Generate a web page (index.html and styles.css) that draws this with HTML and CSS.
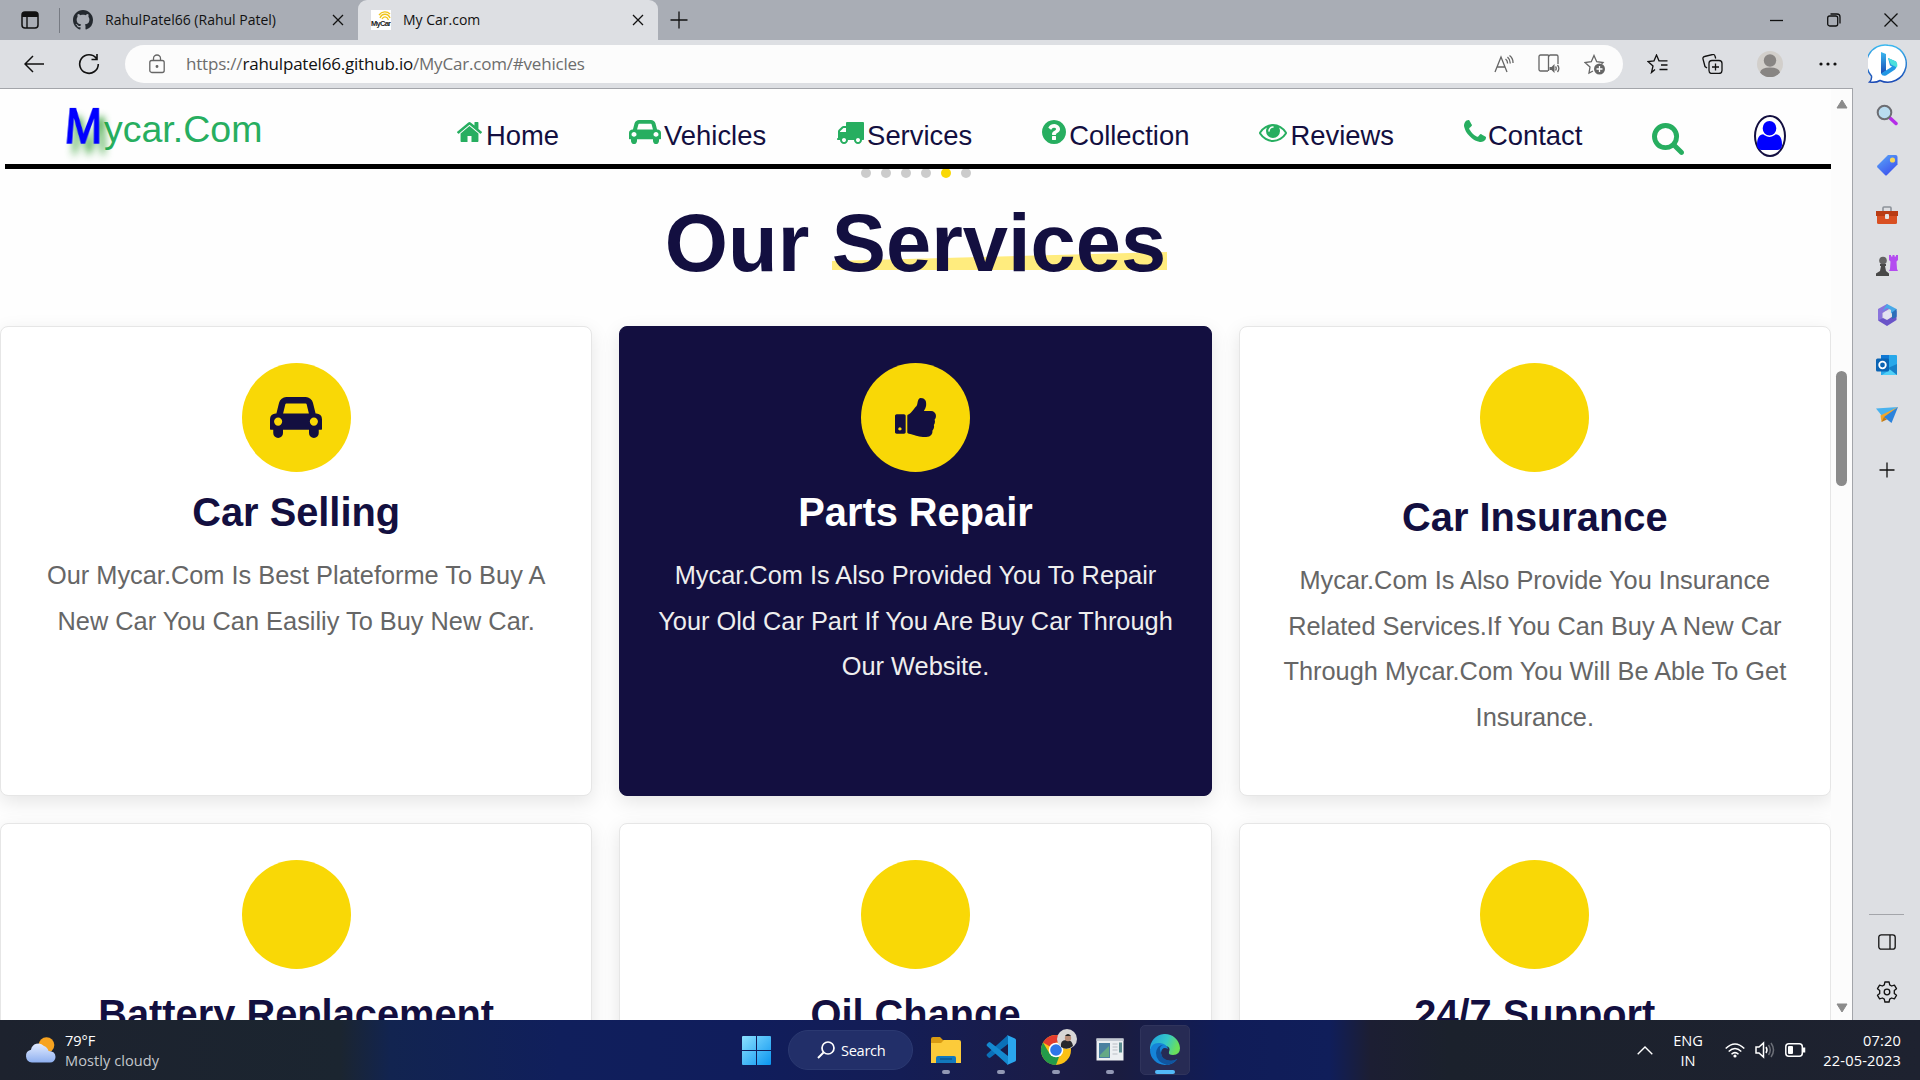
FILE: index.html
```html
<!DOCTYPE html>
<html lang="en">
<head>
<meta charset="utf-8">
<title>My Car.com</title>
<link rel="stylesheet" href="styles.css">
</head>
<body>
<svg class="defs" width="0" height="0" aria-hidden="true">
  <symbol id="home" viewBox="90 253 1612 1283" preserveAspectRatio="none"><path d="M1472 992v480q0 26-19 45t-45 19h-384v-384h-256v384h-384q-26 0-45-19t-19-45v-480q0-1 .5-3t.5-3l575-474 575 474q1 2 1 6zm223-69l-62 74q-8 9-21 11h-3q-13 0-21-7l-692-577-692 577q-12 8-24 7-13-2-21-11l-62-74q-8-10-7-23.5t11-21.5l719-599q32-26 76-26t76 26l244 204v-195q0-14 9-23t23-9h192q14 0 23 9t9 23v408l219 182q10 8 11 21.5t-7 23.5z"/></symbol>
  <symbol id="car" viewBox="0 128 2048 1600" preserveAspectRatio="none"><path d="M480 1088q0-66-47-113t-113-47-113 47-47 113 47 113 113 47 113-47 47-113zm36-320h1016l-89-357q-2-8-14-17.500t-21-9.500h-768q-9 0-21 9.500t-14 17.500zm1372 320q0-66-47-113t-113-47-113 47-47 113 47 113 113 47 113-47 47-113zm160-96v384q0 14-9 23t-23 9h-96v128q0 80-56 136t-136 56-136-56-56-136v-128h-1024v128q0 80-56 136t-136 56-136-56-56-136v-128h-96q-14 0-23-9t-9-23v-384q0-93 65.500-158.500t158.500-65.500h28l105-419q23-94 104-157.500t179-63.500h768q98 0 179 63.500t104 157.500l105 419h28q93 0 158.500 65.500t65.500 158.500z"/></symbol>
  <symbol id="truck" viewBox="64 256 1728 1408" preserveAspectRatio="none"><path d="M640 1408q0-52-38-90t-90-38-90 38-38 90 38 90 90 38 90-38 38-90zm-384-512h384v-256h-158q-13 0-22 9l-195 195q-9 9-9 22v30zm1280 512q0-52-38-90t-90-38-90 38-38 90 38 90 90 38 90-38 38-90zm256-1088v1024q0 15-4 26.500t-13.500 18.500-16.500 11.500-23.500 6-22.500 2-25.500 0-22.500-.5q0 106-75 181t-181 75-181-75-75-181h-384q0 106-75 181t-181 75-181-75-75-181h-64q-3 0-22.500.5t-25.500 0-22.500-2-23.500-6-16.500-11.500-13.500-18.500-4-26.500q0-26 19-45t45-19v-320q0-8-.5-35t0-38 2.500-34.500 6.500-37 14-30.500 22.500-30l198-198q19-19 50.500-32t58.500-13h160v-192q0-26 19-45t45-19h1024q26 0 45 19t19 45z"/></symbol>
  <symbol id="question" viewBox="128 128 1536 1536" preserveAspectRatio="none"><path d="M1024 1376v-192q0-14-9-23t-23-9h-192q-14 0-23 9t-9 23v192q0 14 9 23t23 9h192q14 0 23-9t9-23zm256-672q0-88-55.500-163t-138.500-116-170-41q-243 0-371 213-15 24 8 42l132 100q7 6 19 6 16 0 25-12 53-68 86-92 34-24 86-24 48 0 85.500 26t37.500 59q0 38-20 61t-68 45q-63 28-115.500 86.500t-52.500 125.500v36q0 14 9 23t23 9h192q14 0 23-9t9-23q0-19 21.500-49.500t54.500-49.500q32-18 49-28.500t46-35 44.500-48 28-60.500 12.500-81zm384 192q0 209-103 385.500t-279.500 279.500-385.500 103-385.500-103-279.500-279.500-103-385.500 103-385.500 279.500-279.500 385.500-103 385.500 103 279.500 279.500 103 385.500z"/></symbol>
  <symbol id="eye" viewBox="0 384 1792 1152" preserveAspectRatio="none"><path d="M1664 960q-152-236-381-353 61 104 61 225 0 185-131.500 316.500t-316.500 131.500-316.500-131.500-131.500-316.500q0-121 61-225-229 117-381 353 133 205 333.500 326.500t434.500 121.500 434.500-121.500 333.500-326.500zm-720-384q0-20-14-34t-34-14q-125 0-214.500 89.500t-89.500 214.500q0 20 14 34t34 14 34-14 14-34q0-86 61-147t147-61q20 0 34-14t14-34zm848 384q0 34-20 69-140 230-376.500 368.500t-499.500 138.500-499.500-139-376.500-368q-20-35-20-69t20-69q140-229 376.500-368t499.500-139 499.500 139 376.500 368q20 35 20 69z"/></symbol>
  <symbol id="phone" viewBox="192 128 1408 1408" preserveAspectRatio="none"><path d="M1600 1240q0 27-10 70.500t-21 68.500q-21 50-122 106-94 51-186 51-27 0-52.500-3.500t-57.500-12.500-47.500-14.500-55.500-20.500-49-18q-98-35-175-83-128-79-264.500-215.500t-215.500-264.500q-48-77-83-175-3-9-18-49t-20.500-55.500-14.500-47.500-12.500-57.500-3.500-52.500q0-92 51-186 56-101 106-122 25-11 68.500-21t70.500-10q14 0 21 3 18 6 53 76 11 19 30 54t35 63.500 31 53.500q3 4 17.500 25t21.500 35.500 7 28.500q0 20-28.500 50t-62 55-62 53-28.500 46q0 9 5 22.500t8.500 20.500 14 24 11.500 19q76 137 174 235t235 174q2 1 19 11.500t24 14 20.500 8.500 22.500 5q18 0 46-28.500t53-62 55-62 50-28.500q14 0 28.500 7t35.500 21.500 25 17.500q25 15 53.500 31t63.500 35 54 30q70 35 76 53 3 7 3 21z"/></symbol>
  <symbol id="search" viewBox="64 128 1664 1664"><path d="M1216 832q0-185-131.500-316.500t-316.500-131.500-316.500 131.500-131.500 316.500 131.500 316.500 316.500 131.500 316.500-131.500 131.500-316.500zm512 832q0 52-38 90t-90 38q-54 0-90-38l-343-342q-179 124-399 124-143 0-273.500-55.500t-225-150-150-225-55.500-273.500 55.500-273.500 150-225 225-150 273.500-55.500 273.500 55.500 225 150 150 225 55.500 273.500q0 220-124 399l343 343q37 37 37 90z"/></symbol>
  <symbol id="user" viewBox="192 128 1408 1536" preserveAspectRatio="none"><path d="M1600 1405q0 120-73 189.500t-194 69.500h-874q-121 0-194-69.500t-73-189.500q0-53 3.500-103.500t14-109 26.500-108.500 43-97.500 62-81 85.500-53.500 111.500-20q9 0 42 21.500t74.500 48 108 48 133.500 21.500 133.500-21.500 108-48 74.500-48 42-21.500q61 0 111.500 20t85.500 53.500 62 81 43 97.500 26.500 108.500 14 109 3.500 103.500zm-320-893q0 159-112.500 271.500t-271.500 112.500-271.500-112.500-112.500-271.500 112.500-271.500 271.500-112.500 271.500 112.500 112.500 271.500z"/></symbol>
  <symbol id="thumb" viewBox="64 128 1600 1536" preserveAspectRatio="none"><path d="M320 1344q0-26-19-45t-45-19q-27 0-45.500 19t-18.500 45q0 27 18.500 45.500t45.500 18.500q26 0 45-18.500t19-45.500zm160-512v640q0 26-19 45t-45 19h-288q-26 0-45-19t-19-45v-640q0-26 19-45t45-19h288q26 0 45 19t19 45zm1184 0q0 86-55 149 15 44 15 76 3 76-43 137 17 56 0 117-15 57-54 94 9 112-49 181-64 76-197 78h-129q-66 0-144-15.500t-121.500-29-120.500-39.500q-123-43-158-44-26-1-45-19.500t-19-44.500v-641q0-25 18-43.500t43-20.500q24-2 76-59t101-121q68-87 101-120 18-18 31-48t17.500-48.500 13.500-60.500q7-39 12.500-61t19.500-52 34-50q19-19 45-19 46 0 82.500 10.500t60 26 40 40.500 24 45 12 50 5 45 .5 39q0 38-9.500 76t-19 60-27.500 56q-3 6-10 18t-11 22-8 24h277q78 0 135 57t57 135z"/></symbol>
</svg>

<header class="tabstrip">
  <svg class="ws" width="18" height="18" viewBox="0 0 18 18"><rect x="1" y="1" width="16" height="16" rx="3" fill="none" stroke="#111" stroke-width="1.500"/><path d="M1 6V4a3 3 0 0 1 3-3h10a3 3 0 0 1 3 3v2z" fill="#111"/><path d="M6 6v11" stroke="#111" stroke-width="1.400"/></svg>
  <span class="tab-sep"></span>
  <div class="tab tab-back">
    <svg width="20" height="20" viewBox="0 0 16 16" fill="#24292f"><path d="M8 0C3.580 0 0 3.580 0 8c0 3.540 2.290 6.530 5.470 7.590.4.070.55-.17.55-.38 0-.19-.01-.82-.01-1.490-2.010.37-2.530-.49-2.690-.94-.09-.23-.48-.94-.82-1.130-.28-.15-.68-.52-.01-.53.630-.01 1.080.58 1.230.82.720 1.210 1.870.87 2.330.66.070-.52.280-.87.510-1.070-1.780-.2-3.640-.89-3.640-3.950 0-.87.310-1.590.82-2.150-.08-.2-.36-1.020.08-2.120 0 0 .67-.21 2.200.82.640-.18 1.320-.27 2-.27s1.360.09 2 .27c1.530-1.040 2.200-.82 2.200-.82.440 1.100.160 1.920.080 2.120.510.560.820 1.270.820 2.150 0 3.070-1.870 3.750-3.650 3.950.290.250.540.730.540 1.480 0 1.070-.01 1.930-.01 2.200 0 .21.150.46.550.38A8.010 8.010 0 0 0 16 8c0-4.420-3.580-8-8-8z"/></svg>
    <span class="tab-name">RahulPatel66 (Rahul Patel)</span>
    <svg width="12" height="12" viewBox="0 0 12 12" class="line"><path d="M1 1l10 10M11 1L1 11"/></svg>
  </div>
  <div class="tab tab-front">
    <svg width="20" height="20" viewBox="0 0 20 20"><path d="M0 0h20v20H0z" fill="#fff"/><g fill="none" stroke="#f0c419" stroke-width="1.300"><path d="M9 8c2-5 8-5 10 0M11 9c1.500-3 5-3 6.500 1M8 5c3-4 8-4 11-1"/></g><text x="0" y="16" font-family="Liberation Sans" font-weight="700" font-size="7.500" textLength="20" fill="#222">MyCar</text></svg>
    <span class="tab-name">My Car.com</span>
    <svg width="12" height="12" viewBox="0 0 12 12" class="line"><path d="M1 1l10 10M11 1L1 11"/></svg>
  </div>
  <svg class="newtab line" width="18" height="18" viewBox="0 0 18 18"><path d="M9 .5v17M.5 9h17"/></svg>
  <div class="winbtns line">
    <svg width="14" height="14" viewBox="0 0 14 14"><path d="M0 7.500h13"/></svg>
    <svg width="14" height="14" viewBox="0 0 14 14"><rect x=".7" y="3" width="10" height="10" rx="2"/><path d="M3.500 1h6.500a3 3 0 0 1 3 3v6.500"/></svg>
    <svg width="14" height="14" viewBox="0 0 14 14"><path d="M.5.5l13 13M13.500.5l-13 13"/></svg>
  </div>
</header>

<div class="body">
  <div class="left">
    <div class="toolbar">
      <svg class="back line" width="20" height="18" viewBox="0 0 20 18"><path d="M9 1L1 9l8 8M1 9h19" stroke-width="1.500"/></svg>
      <svg class="reload line" width="22" height="22" viewBox="0 0 22 22"><path d="M18.500 5.500A9.300 9.300 0 1 0 20.300 11M19 1v5.500h-5.500" stroke-width="1.600"/></svg>
      <div class="address">
        <svg width="16" height="20" viewBox="0 0 16 20" class="lock"><rect x=".8" y="6.500" width="14.400" height="12" rx="2"/><path d="M4.500 6.500V4.500a3.500 3.500 0 0 1 7 0v2"/><circle cx="8" cy="12.500" r=".8" fill="#666"/></svg>
        <p class="url">https://<b>rahulpatel66.github.io</b>/MyCar.com/#vehicles</p>
        <div class="addr-icons">
          <svg width="20" height="18" viewBox="0 0 20 18"><path d="M1 17L7 2l6 15M3 12h8M11.500 4a5 5 0 0 1 2 4.500M13.500 2a8 8 0 0 1 2.700 6.500M15.500.5A9 9 0 0 1 19 8"/></svg>
          <svg width="22" height="20" viewBox="0 0 22 20"><path d="M10 17H2.500A1.500 1.500 0 0 1 1 15.500v-13A1.500 1.500 0 0 1 2.500 1H10l1 1 1-1h6.500A1.500 1.500 0 0 1 20 2.500V10M10.500 2v15"/><path d="M11.500 13h2l3-3v9l-3-3h-2z" fill="#666" stroke="none"/><path d="M17.500 12.500q1.500 2 0 4M19.500 11q2.700 3.500 0 7"/></svg>
          <svg width="22" height="21" viewBox="0 0 22 21"><path d="M9 17l-4 2 1-6-5-4.500 6.300-.8L10 1.500l2.700 6.200 6.300.8-1.500 1.500"/><circle cx="15.500" cy="15" r="5.500" fill="#666" stroke="none"/><path d="M15.500 12v6M12.500 15h6" stroke="#fff"/></svg>
        </div>
      </div>
      <div class="tools line">
        <svg width="21" height="20" viewBox="0 0 21 20"><path d="M8 15.500L4.500 18.500 6 12 1 7.500l6-.7L9.500 1l2.500 5.800h8.500M14 11h6.500M12.500 15.500h8"/></svg>
        <svg width="21" height="20" viewBox="0 0 21 20"><path d="M5 14L3 12.500 1 5a2 2 0 0 1 1.500-2.500l8-2a2 2 0 0 1 2.500 1.500l.7 2.500"/><rect x="7" y="6.500" width="13" height="13" rx="3"/><path d="M13.500 9.500v7M10 13h7"/></svg>
        <svg width="26" height="26" viewBox="0 0 26 26" stroke="none"><circle cx="13" cy="13" r="13" fill="#d2cfcb"/><circle cx="13" cy="9.500" r="6.200" fill="#888583"/><path d="M3 21.500q1-5 10-5t10 5a13 13 0 0 1-20 0z" fill="#888583"/></svg>
        <svg width="18" height="4" viewBox="0 0 18 4" fill="#111" stroke="none"><circle cx="2" cy="2" r="1.600"/><circle cx="9" cy="2" r="1.600"/><circle cx="16" cy="2" r="1.600"/></svg>
      </div>
    </div>

    <div class="view">
      <main class="page">
        <nav class="nav">
          <div class="logo"><span class="logo-m">M</span>ycar.Com</div>
          <a class="link"><svg width="25" height="20" class="g-home"><use href="#home"/></svg>Home</a>
          <a class="link"><svg width="32" height="24" class="g-car"><use href="#car"/></svg>Vehicles</a>
          <a class="link"><svg width="27" height="22" class="g-truck"><use href="#truck"/></svg>Services</a>
          <a class="link"><svg width="24" height="24" class="g-q"><use href="#question"/></svg>Collection</a>
          <a class="link"><svg width="28" height="18" class="g-eye"><use href="#eye"/></svg>Reviews</a>
          <a class="link"><svg width="22" height="22" class="g-phone"><use href="#phone"/></svg>Contact</a>
          <svg class="find" width="32" height="32"><use href="#search"/></svg>
          <div class="account"><svg width="25" height="29"><use href="#user"/></svg></div>
        </nav>
        <div class="dots"><i></i><i></i><i></i><i></i><i class="on"></i><i></i></div>
        <h1 class="title">Our <span>Services</span></h1>
        <section class="cards">
          <article class="card"><div class="disc"><svg width="52" height="41"><use href="#car"/></svg></div><h3>Car Selling</h3><p>Our Mycar.Com Is Best Plateforme To Buy A New Car You Can Easiliy To Buy New Car.</p></article>
          <article class="card dark"><div class="disc"><svg width="41" height="39"><use href="#thumb"/></svg></div><h3>Parts Repair</h3><p>Mycar.Com Is Also Provided You To Repair Your Old Car Part If You Are Buy Car Through Our Website.</p></article>
          <article class="card low"><div class="disc"></div><h3>Car Insurance</h3><p>Mycar.Com Is Also Provide You Insurance Related Services.If You Can Buy A New Car Through Mycar.Com You Will Be Able To Get Insurance.</p></article>
          <article class="card low"><div class="disc"></div><h3>Battery Replacement</h3></article>
          <article class="card low"><div class="disc"></div><h3>Oil Change</h3></article>
          <article class="card low"><div class="disc"></div><h3>24/7 Support</h3></article>
        </section>
      </main>
      <div class="scroll">
        <svg width="12" height="10" viewBox="0 0 12 10"><path d="M6 1l5 8H1z" stroke="#8b8b8b" stroke-linejoin="round"/></svg>
        <span class="thumb"></span>
        <svg width="12" height="10" viewBox="0 0 12 10" class="down"><path d="M6 9l5-8H1z" stroke="#8b8b8b" stroke-linejoin="round"/></svg>
      </div>
    </div>
  </div>

  <aside class="side">
    <svg class="bing" width="40" height="40" viewBox="0 0 40 40"><defs><linearGradient id="b1" x1="0" y1="0" x2="0" y2="1"><stop offset="0" stop-color="#3bb9f0"/><stop offset="1" stop-color="#1b4ab5"/></linearGradient></defs><path d="M20 1.200a18.500 18.500 0 1 1-8 35.300q-4 2.500-10.500 1.500 2.500-2 2-6A18.500 18.500 0 0 1 20 1.200z" fill="#fff" stroke="url(#b1)" stroke-width="1.500"/><path d="M13 8l5 2v17l-5 3z" fill="url(#b1)"/><path d="M20 14l8 3.500q2 4-1 8l-9 6q-4 1-5-2l9-5.500 2-1.500-2-1z" fill="#2397e4"/><path d="M20 14l8 3.500q2 2 1 6l-6-3z" fill="#4be0dc"/></svg>
    <div class="apps">
      <svg viewBox="0 0 22 22"><path d="M13.500 13.500l6.500 6" stroke="#b52de8" stroke-width="3.500" stroke-linecap="round"/><circle cx="8.500" cy="8.500" r="6.800" fill="#b9dcf0" stroke="#6c6d72" stroke-width="2"/></svg>
      <svg viewBox="0 0 22 22"><defs><linearGradient id="t1" x1="0" y1="0" x2=".7" y2="1"><stop offset="0" stop-color="#5aaaf8"/><stop offset="1" stop-color="#3c50ee"/></linearGradient></defs><path d="M12 1h7.500q2 0 2 2v7.500L11 21q-1 1-2 0l-7.500-7.500q-1-1 0-2z" fill="url(#t1)"/><circle cx="16.500" cy="6" r="2.600" fill="#f6d75a"/></svg>
      <svg viewBox="0 0 22 22"><path d="M7 7V4q0-1 1-1h6q1 0 1 1v3" fill="none" stroke="#8c9299" stroke-width="1.600"/><rect x="1" y="7" width="20" height="13" rx="1.500" fill="#d95022"/><path d="M0 7h22v5H0z" fill="#b93c14"/><rect x="9" y="10" width="4" height="5" rx="1" fill="#e5e5e5"/></svg>
      <svg viewBox="0 0 22 22"><path d="M13 1h2v1.500h1.500V1h2v1.500H20V1h2v5l-1.500 1.500L21 15l1 2h-9l1-2 .5-7.500L13 6z" fill="#b44cf0"/><circle cx="7" cy="6.500" r="3.800" fill="#636363"/><path d="M4 10h6v2H9l1 5 3 2.500V22H0v-2.500L4 17l1-5H4z" fill="#484848"/></svg>
      <svg viewBox="0 0 22 22"><path d="M11 0l-9 5v11l4.500 2.500V9L14 4.500z" fill="#8a74dc"/><path d="M11 0l9.500 5v7L15 9V6L11 4 6.500 7z" fill="#48a9e8"/><path d="M20.500 7v9L11 22l-9-5.500 5-2.500 4 2 5.500-3.500V9z" fill="#6a54c8"/><path d="M20.500 5v8L16 15V8.500z" fill="#2d6fb8"/><circle cx="11" cy="11" r="3.800" fill="#e3e2f2"/></svg>
      <svg viewBox="0 0 22 22"><path d="M5 1h15q1 0 1 1v18q0 1-1 1H5z" fill="#28a8ea"/><path d="M5 1h8v10H5z" fill="#0f78d4"/><path d="M21 11v9q0 1-1 1H6z" fill="#50d0f8"/><path d="M21 21L12 14l9-4z" fill="#1780c8"/><rect x="0" y="4.500" width="13" height="13" rx="1.500" fill="#0a64b4"/><circle cx="6.500" cy="11" r="3.300" fill="none" stroke="#fff" stroke-width="1.800"/></svg>
      <svg viewBox="0 0 22 22"><path d="M0 4.500L22 3l-16 9z" fill="#49b2ee"/><path d="M22 3L4.500 11.500l1 6.500z" fill="#f1a62b"/><path d="M22 3l-6.500 16L8 13z" fill="#2c83dc"/><path d="M5.500 18L8 13l3 2.500z" fill="#bd791b"/></svg>
    </div>
    <svg class="plus line" width="16" height="16" viewBox="0 0 16 16"><path d="M8 .5v15M.5 8h15"/></svg>
    <span class="rule"></span>
    <svg class="panel line" width="18" height="16" viewBox="0 0 18 16"><rect x=".8" y=".8" width="16.400" height="14.400" rx="2.500"/><path d="M12 1v14"/></svg>
    <svg class="gear line" width="22" height="22" viewBox="0 0 22 22"><path d="M8.900 1h4.200l.6 2.900 1.900 1.100 2.800-.9 2.100 3.600-2.200 1.900v2.800l2.200 1.900-2.100 3.600-2.800-.9-1.900 1.100-.6 2.900H8.900l-.6-2.900-1.900-1.100-2.800.9-2.100-3.600 2.200-1.900V9.600L1.500 7.700l2.100-3.600 2.800.9 1.900-1.100z" stroke-linejoin="round"/><circle cx="11" cy="11" r="2.800"/></svg>
  </aside>
</div>

<footer class="taskbar">
  <svg class="weather" width="31" height="26" viewBox="0 0 31 26"><defs><linearGradient id="w1" x1="0" y1="0" x2="0" y2="1"><stop offset="0" stop-color="#e3ecff"/><stop offset="1" stop-color="#8fb0f0"/></linearGradient></defs><circle cx="21.500" cy="8" r="7.800" fill="#f7a320"/><path d="M7 25.500a6.500 6.500 0 0 1-1-12.800A7.500 7.500 0 0 1 19 9a7 7 0 0 1 4.500 5q7 0 7 6a5.500 5.500 0 0 1-5.500 5.500z" fill="url(#w1)"/></svg>
  <div class="forecast"><span>79°F</span><span class="dim">Mostly cloudy</span></div>
  <div class="dock">
    <svg class="start" width="29" height="29" viewBox="0 0 29 29"><defs><linearGradient id="s1" x1="0" y1="0" x2="1" y2="1"><stop offset="0" stop-color="#8be0ff"/><stop offset="1" stop-color="#0a95f0"/></linearGradient></defs><path d="M1 0h13v14H0V1q0-1 1-1zM15 0h13q1 0 1 1v13H15zM0 15h14v14H1q-1 0-1-1zM15 15h14v13q0 1-1 1H15z" fill="url(#s1)"/></svg>
    <div class="searchbox"><svg width="18" height="18" viewBox="0 0 18 18"><circle cx="11" cy="7" r="6" fill="none" stroke="#fff" stroke-width="1.700"/><path d="M6.500 11.500L1 17" stroke="#fff" stroke-width="1.900"/></svg><span>Search</span></div>
    <div class="app"><svg viewBox="0 0 30 30"><path d="M0 4q0-2 2-2h7l3 3h6v5H0z" fill="#d99b12"/><path d="M0 8h10l3-3h15q2 0 2 2v21H0z" fill="#fccb3a"/><path d="M5 28v-5q0-2 2-2h16q2 0 2 2v5z" fill="#1278be"/><path d="M9 24h12" stroke="#0b4d85" stroke-width="1.200"/></svg></div>
    <div class="app"><svg viewBox="0 0 30 30"><path d="M22 0L1 19q-1 1 0 2l1.500 1.500q1 .8 2 0L22 9z" fill="#0a70b8"/><path d="M22 30L1 11q-1-1 0-2l1.500-1.500q1-.8 2 0L22 21z" fill="#1489d0"/><path d="M21 0l8 3.500q1 .5 1 1.500v20q0 1-1 1.500L21 30q1-.5 1-2V2q0-1.500-1-2z" fill="#2aa6ee"/></svg></div>
    <div class="app"><svg viewBox="0 0 30 30"><circle cx="15" cy="15" r="15" fill="#fbc116"/><path d="M15 15L2 7.500A15 15 0 0 1 28 7.500H15z" fill="#e33b2e"/><path d="M15 30A15 15 0 0 1 2 7.500l6.500 11 6.500 3.500h3z" fill="#239a4a"/><circle cx="15" cy="15" r="7.300" fill="#fff"/><circle cx="15" cy="15" r="5.800" fill="#2f76e8"/><circle cx="26" cy="4" r="10" fill="#d8d6d6"/><path d="M20 12q-1-7 5-7 6-1 7 6-6 5-12 1z" fill="#27272c"/><circle cx="27" cy="3" r="3.200" fill="#b98d78"/><path d="M24 1q3-4 6 0z" fill="#222"/></svg></div>
    <div class="app"><svg viewBox="0 0 30 30"><path d="M1.500 3.500h27v22h-27z" fill="#eceff2"/><path d="M1.500 3.500h27v2.500h-27z" fill="#c3c9d2"/><path d="M4 8h11v15H4z" fill="#4a80a0"/><path d="M5 20l9-9v11H5z" fill="#64a985"/><path d="M17.500 9h5M17.500 12h5M17.500 15h5M17.500 19h5" stroke="#b9bec5"/><path d="M24 7.500h3v10h-3z" fill="#5b8c90"/></svg></div>
    <div class="app current"><svg viewBox="0 0 30 30"><defs><linearGradient id="e1" x1="0" y1="0" x2="1" y2=".3"><stop offset="0" stop-color="#1b9de2"/><stop offset=".6" stop-color="#35c8c8"/><stop offset="1" stop-color="#6ae05a"/></linearGradient></defs><path d="M0 15A15 15 0 0 1 30 13q0 7-7 7-5 0-4-3 2-5-3-6Q6 8 0 15z" fill="url(#e1)"/><path d="M0 15Q2 7 10 8q7 1 8 6-6-3-7 4 0 8 10 8 4 0 6-2-4 6-12 6A15 15 0 0 1 0 15z" fill="#1584d8"/><path d="M11 18q-3-6 2-8-6 0-7 8 0 9 11 12 7-1 10.500-6-4 2-8 1.500Q12 25 11 18z" fill="#10559f"/></svg></div>
  </div>
  <svg class="chev" width="16" height="9" viewBox="0 0 16 9"><path d="M.7 8.300L8 1l7.300 7.300"/></svg>
  <div class="lang"><span>ENG</span><span>IN</span></div>
  <div class="tray">
    <svg width="20" height="15" viewBox="0 0 20 15"><path d="M.7 5.500q9.300-9 18.600 0M3.700 8.500q6.300-6 12.600 0M6.500 11.300q3.500-3.300 7 0"/><circle cx="10" cy="13" r="1.600" fill="#fff" stroke="none"/></svg>
    <svg width="20" height="18" viewBox="0 0 20 18"><path d="M1 6h3l4.500-4v14L4 12H1z"/><path d="M11 6q2 3 0 6"/><path d="M13.500 4q3.500 5 0 10M16 2q5 7 0 14" opacity=".35"/></svg>
    <svg width="21" height="14" viewBox="0 0 21 14"><rect x=".8" y=".8" width="16.500" height="12.400" rx="3"/><path d="M19 4.500v5" stroke-width="2.500"/><rect x="3" y="3" width="5" height="8" rx="1" fill="#fff" stroke="none"/></svg>
  </div>
  <div class="clock"><span>07:20</span><span>22-05-2023</span></div>
</footer>
</body>
</html>
```
FILE: styles.css
```css
* { box-sizing: border-box; }
body {
  margin: 0;
  width: 1920px;
  height: 1080px;
  overflow: hidden;
  display: flex;
  flex-direction: column;
  font-family: "Open Sans", "Noto Sans", sans-serif;
  font-size: 14px;
  color: #111;
}
svg { display: block; flex: none; }
h1, h3, p { margin: 0; }
.defs { position: absolute; }
.line { fill: none; stroke: #111; stroke-width: 1.3; }

/* tab strip */
.tabstrip { height: 40px; flex: none; background: #a9adb5; display: flex; align-items: center; }
.ws { margin-left: 21px; }
.tab-sep { width: 1px; height: 25px; background: #777b83; margin-left: 20px; }
.tab { display: flex; align-items: center; height: 40px; padding-right: 14px; }
.tab svg:first-child { margin-right: 12px; }
.tab-name { flex: 1; white-space: nowrap; letter-spacing: 0; line-height: 20px; }
.tab-back { width: 298px; padding-left: 13px; }
.tab-front { width: 300px; padding-left: 13px; background: #dddfe3; border-radius: 9px 9px 0 0; }
.newtab { margin-left: 12px; }
.winbtns { margin-left: auto; margin-right: 22px; display: flex; gap: 43px; }

/* frame */
.body { flex: 1; min-height: 0; display: flex; }
.left { width: 1853px; display: flex; flex-direction: column; }
.toolbar { height: 48px; flex: none; background: #dddfe3; display: flex; align-items: center; }
.back { margin-left: 24px; }
.reload { margin-left: 34px; }
.address {
  margin-left: 25px; width: 1498px; height: 38px; border-radius: 19px; background: #fcfcfc;
  display: flex; align-items: center; padding: 0 17px 0 24px;
}
.lock, .addr-icons { fill: none; stroke: #666; stroke-width: 1.3; }
.url { margin-left: 21px; flex: 1; font-size: 17px; line-height: 24px; letter-spacing: -0.2px; color: #6d6d6d; }
.url b { font-weight: 400; color: #111; }
.addr-icons { display: flex; align-items: center; gap: 24px; }
.tools { margin-left: 24px; display: flex; align-items: center; gap: 34px; }
.tools svg:nth-child(4) { margin-left: 2px; }

.view { flex: 1; min-height: 0; display: flex; border-top: 1px solid #a3a5aa; border-right: 1px solid #a3a5aa; background: #fff; }
.page { width: 1831px; overflow: hidden; background: #fefefe; font-family: "Liberation Sans", Arial, sans-serif; color: #130f40; }

/* site navigation */
.nav { height: 80px; margin-left: 5px; border-bottom: 5px solid #000; display: flex; }
.logo { width: 391px; padding: 18px 0 0 60px; font-size: 37.5px; line-height: 44px; color: #27ae60; display: flex; white-space: nowrap; }
.logo-m {
  width: 39px; height: 44px; font-size: 53px; line-height: 36px; color: #00f;
  -webkit-text-stroke: 1.8px #00f; text-shadow: 7px 10px 9px rgba(20, 145, 20, .9);
  transform: perspective(150px) rotateX(24deg) skewX(-5deg) scale(.84, 1.03); transform-origin: 0 50%;
}
.link { display: flex; align-items: flex-start; font-size: 27.4px; line-height: 32px; padding-top: 31px; white-space: nowrap; }
.link svg { fill: #27ae60; }
.g-home { margin: 2px 4px 0 61px; }
.g-car { margin: 0 3px 0 70px; }
.g-truck { margin: 2px 3px 0 71px; }
.g-q { margin: 0 3px 0 70px; }
.g-eye { margin: 4px 3px 0 70px; }
.g-phone { margin: 0 2px 0 70px; }
.find { margin: 34px 0 0 70px; fill: #27ae60; }
.account { width: 32px; height: 42px; margin: 26px 0 0 70px; border: 2px solid #130f40; border-radius: 50%; padding: 4px 0 0 1px; fill: #00f; }

.dots { display: flex; justify-content: center; gap: 10px; height: 10px; margin-top: -1px; clip-path: inset(1px 0 0 0); }
.dots i { width: 10px; height: 10px; border-radius: 50%; background: #ccc; }
.dots .on { background: #f9d806; }

.title { margin-top: 18px; text-align: center; font-size: 81.25px; line-height: 94px; }
.title span { position: relative; display: inline-block; isolation: isolate; }
.title span::before {
  content: ""; position: absolute; z-index: -1; left: 0; right: -1px; top: 56px; height: 18px;
  background: #ffec7e; clip-path: polygon(0 50%, 100% 0, 100% 100%, 0 100%);
}

/* service cards */
.cards { margin-top: 36px; display: grid; grid-template-columns: repeat(3, 1fr); grid-auto-rows: 470px; gap: 27px; }
.card {
  border: 1px solid #e6e6e6; border-radius: 8px; background: #fff; text-align: center;
  padding: 36px 35px 0; box-shadow: 0 6px 19px rgba(0, 0, 0, .1);
}
.disc { width: 109px; height: 109px; border-radius: 50%; background: #f9d806; margin: 0 auto; display: flex; align-items: center; justify-content: center; fill: #130f40; }
.card h3 { margin-top: 17px; font-size: 39.8px; line-height: 46px; }
.card p { margin-top: 18px; font-size: 25.36px; line-height: 45.7px; color: #666; }
.low h3 { margin-top: 22px; }
.dark { background: #130f40; border-color: #130f40; }
.dark h3 { color: #fff; }
.dark p { color: #eee; }

.scroll { width: 21px; background: #fcfcfc; display: flex; flex-direction: column; align-items: center; padding: 10px 0 7px; fill: #8b8b8b; }
.thumb { width: 11px; height: 115px; margin-top: 262px; border-radius: 6px; background: #8b8b8b; }
.down { margin-top: auto; }

/* browser side bar */
.side { width: 67px; background: #dddfe3; display: flex; flex-direction: column; align-items: center; padding-top: 4px; }
.bing { margin-left: 2px; }
.apps { margin-top: 20px; display: flex; flex-direction: column; gap: 28px; }
.apps svg { width: 22px; height: 22px; }
.plus { margin-top: 36px; }
.rule { width: 35px; height: 1px; background: #a3a5aa; margin-top: 436px; }
.panel { margin-top: 19px; }
.gear { margin-top: 31px; }

/* taskbar */
.taskbar {
  height: 60px; flex: none; display: flex; align-items: center; color: #fff; line-height: 20px; font-size: 14.6px;
  background: linear-gradient(90deg, #1d222e 0, #1b2530 340px, #122450 390px, #101f5c 560px, #101d5c 740px, #141d55 900px, #1b1c46 1060px, #1a1c40 1120px, #101c58 1220px, #101e5a 1330px, #1c1e33 1370px, #1b212c 1450px, #1e2230 1920px);
}
.weather { margin-left: 25px; }
.forecast { display: flex; flex-direction: column; margin-left: 9px; width: 677px; letter-spacing: -0.1px; }
.dim { color: #c3c7cc; letter-spacing: .05px; }
.dock { display: flex; align-items: center; width: 448px; }
.searchbox { width: 126px; height: 40px; margin-left: 17px; margin-right: 8px; border-radius: 20px; background: #222f69; border: 1px solid #2b3971; display: flex; align-items: center; padding-left: 28px; gap: 6px; letter-spacing: -0.3px; }
.app { width: 50px; height: 50px; margin-left: 5px; border-radius: 5px; display: flex; flex-direction: column; align-items: center; padding-top: 10px; }
.searchbox + .app { margin-left: 0; }
.app svg { width: 30px; height: 30px; overflow: visible; }
.app::after { content: ""; width: 8px; height: 4px; border-radius: 2px; background: #9298b4; margin-top: 5px; }
.current { background: #272b54; border: 1px solid #30345c; padding-top: 9px; }
.current::after { width: 20px; background: #52b9f8; }
.chev { margin-left: 447px; fill: none; stroke: #fff; stroke-width: 1.4; }
.lang { margin-left: 18px; width: 34px; display: flex; flex-direction: column; align-items: center; }
.tray { margin-left: 20px; display: flex; align-items: center; gap: 10px; fill: none; stroke: #fff; stroke-width: 1.5; }
.clock { margin-left: auto; margin-right: 19px; display: flex; flex-direction: column; align-items: flex-end; letter-spacing: .15px; }
```
